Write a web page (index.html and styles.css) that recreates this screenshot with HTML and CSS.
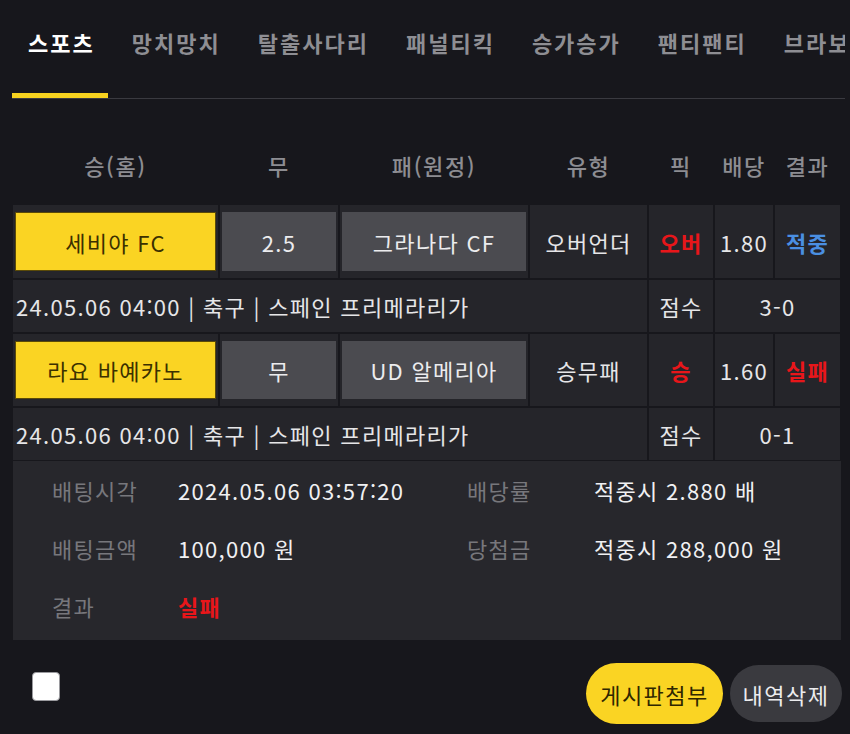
FILE: index.html
```html
<!DOCTYPE html>
<html lang="ko">
<head>
    <meta charset="UTF-8">
    <meta name="viewport" content="width=device-width, initial-scale=1.0">
    <title>배팅내역</title>
    <link rel="stylesheet" href="styles.css">
</head>
<body>
    <nav class="tabs">
        <a class="tab active">스포츠</a>
        <a class="tab">망치망치</a>
        <a class="tab">탈출사다리</a>
        <a class="tab">패널티킥</a>
        <a class="tab">승가승가</a>
        <a class="tab">팬티팬티</a>
        <a class="tab">브라보</a>
    </nav>

    <div class="bet-head">
        <div>승(홈)</div>
        <div>무</div>
        <div>패(원정)</div>
        <div>유형</div>
        <div>픽</div>
        <div>배당</div>
        <div>결과</div>
    </div>

    <div class="bet-table">
        <div class="cell"><span class="pick selected">세비야 FC</span></div>
        <div class="cell"><span class="pick">2.5</span></div>
        <div class="cell"><span class="pick">그라나다 CF</span></div>
        <div class="cell">오버언더</div>
        <div class="cell red bold">오버</div>
        <div class="cell">1.80</div>
        <div class="cell blue bold">적중</div>

        <div class="cell info">24.05.06 04:00 | 축구 | 스페인 프리메라리가</div>
        <div class="cell">점수</div>
        <div class="cell score">3-0</div>

        <div class="cell"><span class="pick selected">라요 바예카노</span></div>
        <div class="cell"><span class="pick">무</span></div>
        <div class="cell"><span class="pick">UD 알메리아</span></div>
        <div class="cell">승무패</div>
        <div class="cell red bold">승</div>
        <div class="cell">1.60</div>
        <div class="cell red bold">실패</div>

        <div class="cell info">24.05.06 04:00 | 축구 | 스페인 프리메라리가</div>
        <div class="cell">점수</div>
        <div class="cell score">0-1</div>
    </div>

    <div class="summary">
        <span class="label">배팅시각</span>
        <span class="value">2024.05.06 03:57:20</span>
        <span class="label">배당률</span>
        <span class="value">적중시 2.880 배</span>

        <span class="label">배팅금액</span>
        <span class="value">100,000 원</span>
        <span class="label">당첨금</span>
        <span class="value">적중시 288,000 원</span>

        <span class="label">결과</span>
        <span class="value red bold">실패</span>
    </div>

    <div class="footer">
        <span class="checkbox"></span>
        <button class="btn btn-attach">게시판첨부</button>
        <button class="btn btn-delete">내역삭제</button>
    </div>
</body>
</html>
```

FILE: styles.css
```css
* {
    box-sizing: border-box;
    margin: 0;
    padding: 0;
}

body {
    font-family: 'Noto Sans CJK KR', 'Noto Sans', sans-serif;
    background-color: #17171c;
    color: #e6e6e8;
    width: 850px;
    height: 734px;
    overflow: hidden;
    font-size: 22px;
    letter-spacing: 1.3px;
}

/* tabs */
.tabs {
    display: flex;
    margin: 0 5px 0 12px;
    border-bottom: 1px solid #3a3a40;
    overflow: hidden;
    white-space: nowrap;
}

.tab {
    flex-shrink: 0;
    padding: 24px 13px 33px 16px;
    margin-right: 8px;
    line-height: 36px;
    font-size: 22px;
    font-weight: 700;
    letter-spacing: 2px;
    color: #8e8e93;
    border-bottom: 5px solid transparent;
}

.tab.active {
    color: #ffffff;
    border-bottom-color: #f7d21f;
}

/* table */
.bet-head,
.bet-table {
    display: grid;
    grid-template-columns: 205px 118px 188px 117px 64px 58px 65px;
    column-gap: 2px;
    margin-left: 13px;
    width: 827px;
}

.bet-head {
    padding: 51px 0 25px;
    line-height: 30px;
    color: #8d8d92;
    font-weight: 500;
    letter-spacing: 1.6px;
    text-align: center;
}

.bet-table {
    grid-template-rows: 73px 52px 72px 52px;
    row-gap: 2px;
}

.cell {
    background-color: #25252a;
    display: flex;
    align-items: center;
    justify-content: center;
    padding: 7px 2px;
}

.cell.info {
    grid-column: span 4;
    justify-content: flex-start;
    padding-left: 3px;
}

.cell.score {
    grid-column: span 2;
}

.pick {
    display: flex;
    align-items: center;
    justify-content: center;
    width: 100%;
    height: 100%;
    background-color: #4b4b50;
    color: #ececee;
}

.pick.selected {
    background-color: #fad423;
    border: 1px solid #5a4a08;
    color: #3b3000;
}

.red {
    color: #e8161a;
}

.blue {
    color: #4a8fe2;
}

.bold {
    font-weight: 700;
}

/* summary */
.summary {
    display: grid;
    grid-template-columns: 126px 289px 127px auto;
    grid-auto-rows: 58px;
    align-items: center;
    margin: 1px 9px 0 13px;
    padding: 0 0 5px 39px;
    background-color: #27272c;
}

.summary .label {
    color: #77777c;
}

.summary .value {
    color: #f0f0f2;
}

.summary .value.red {
    color: #e8161a;
}

/* footer */
.footer {
    display: flex;
    align-items: flex-start;
    padding: 23px 8px 0 32px;
}

.checkbox {
    width: 28px;
    height: 29px;
    margin-top: 9px;
    margin-right: auto;
    background-color: #ffffff;
    border: 1px solid #9a9a9e;
    border-radius: 4px;
}

.btn {
    border: none;
    font-family: 'Noto Sans CJK KR', sans-serif;
    font-size: 22px;
    font-weight: 400;
    letter-spacing: 1.5px;
    border-radius: 32px;
}

.btn-attach {
    width: 137px;
    height: 61px;
    background-color: #fad423;
    color: #2e2600;
}

.btn-delete {
    width: 112px;
    height: 57px;
    margin: 2px 0 0 7px;
    background-color: #3a3a3f;
    color: #ececee;
}
```
